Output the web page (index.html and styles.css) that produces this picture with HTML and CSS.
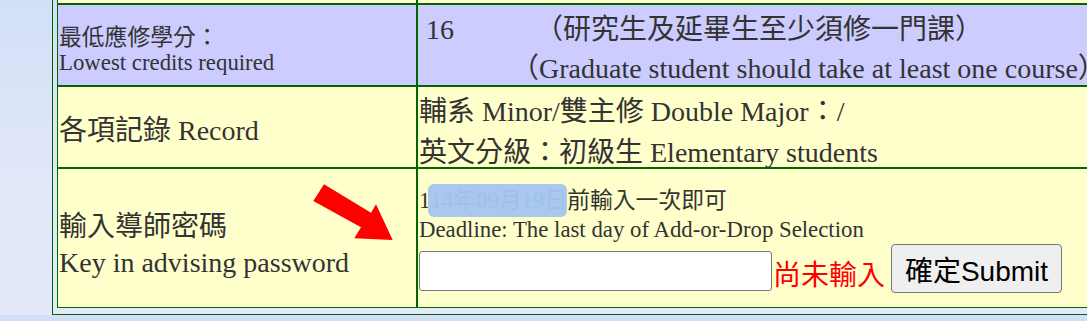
FILE: index.html
```html
<!DOCTYPE html>
<html lang="zh-Hant">
<head>
    <meta charset="UTF-8">
    <meta name="viewport" content="width=device-width, initial-scale=1.0">
    <title>選課記錄</title>
    <link rel="stylesheet" href="styles.css">
</head>
<body>
    <div class="frame">
        <table class="record">
            <tr class="row-prev">
                <td class="label"></td>
                <td class="value"></td>
            </tr>
            <tr class="row-credit">
                <td class="label label-small">最低應修學分：<br>Lowest credits required</td>
                <td class="value value-top">
                    <div class="credit-line"><span class="credit">16</span><span class="credit-note">（研究生及延畢生至少須修一門課）</span></div>
                    <div class="credit-line-en">（Graduate student should take at least one course）</div>
                </td>
            </tr>
            <tr class="row-record">
                <td class="label label-record">各項記錄 Record</td>
                <td class="value value-top">
                    <div class="record-line">輔系 Minor/雙主修 Double Major：/</div>
                    <div class="record-line-last">英文分級：初級生 Elementary students</div>
                </td>
            </tr>
            <tr class="row-advisor">
                <td class="label label-advisor">
                    輸入導師密碼<br>Key in advising password
                    <svg class="arrow" viewBox="313 184 81 57" width="81" height="57">
                        <polygon points="324,184.3 371,212.7 376,204.3 392.7,240 354.3,238.3 361,227.3 313.3,201" fill="#ff0000"/>
                    </svg>
                </td>
                <td class="value value-top value-advisor">
                    <div class="deadline-zh">1<span class="masked">14年09月19日</span>前輸入一次即可</div>
                    <div class="deadline-en">Deadline: The last day of Add-or-Drop Selection</div>
                    <div class="password-row">
                        <input type="password" class="password-input">
                        <span class="status">尚未輸入</span>
                        <button class="submit-btn">確定Submit</button>
                    </div>
                </td>
            </tr>
        </table>
    </div>
</body>
</html>
```

FILE: styles.css
```css
body {
    margin: 0;
    overflow: hidden;
    background: linear-gradient(#d2dff6, #e3e8fa 60%);
    font-family: "Liberation Serif", "Noto Sans CJK TC", serif;
    color: #333;
}

.frame {
    width: 1200px;
    margin: -40px 0 0 52px;
    padding: 4px 4px 6px;
    border: 1px solid #006600;
}

.record {
    width: 100%;
    border-spacing: 0;
}

.record td {
    box-sizing: border-box;
    border: 1px solid #006600;
    padding: 0 1px;
    vertical-align: middle;
}

.record td.value-top {
    vertical-align: top;
}

.label {
    width: 360px;
    position: relative;
    font-size: 28px;
    line-height: 36px;
}

.record td.label-small {
    padding-top: 10px;
    font-size: 22.8px;
    line-height: 25px;
}

.record td.label-record {
    padding-top: 8px;
}

.record td.label-advisor {
    padding-top: 13px;
}

.value {
    font-size: 28px;
}

.row-prev td {
    height: 39px;
    background: #ffffcc;
}

.row-credit td {
    height: 82px;
    background: #ccccff;
}

.row-record td {
    height: 82px;
    background: #ffffcc;
}

.row-advisor td {
    height: 140px;
    background: #ffffcc;
}

.credit-line {
    padding-top: 4px;
    line-height: 42px;
}

.credit {
    margin-left: 7px;
}

.credit-note {
    margin-left: 81px;
}

.credit-line-en {
    padding: 2px 0 0 92px;
    line-height: 32px;
}

.record-line {
    padding-top: 3px;
    line-height: 44px;
}

.record-line-last {
    padding-top: 5px;
    line-height: 28px;
}

.arrow {
    position: absolute;
    left: 255px;
    top: 15px;
}

.record td.value-advisor {
    padding-top: 17px;
    font-size: 22.8px;
}

.deadline-zh {
    line-height: 29px;
}

.deadline-en {
    line-height: 30px;
}

.masked {
    margin-left: -2px;
    padding: 4px 0 4px 2px;
    border-radius: 6px;
    background: #a9c8ee;
    color: #a0c0ea;
}

.password-row {
    display: flex;
    align-items: flex-end;
    margin-top: -1px;
}

.password-input {
    box-sizing: border-box;
    width: 353px;
    height: 40px;
    margin: 0 0 2px;
    padding: 0 4px;
    border: 1px solid #767676;
    border-radius: 3px;
    background: #fff;
}

.status {
    margin-left: 1px;
    font-family: "Noto Sans CJK TC", sans-serif;
    font-size: 28px;
    line-height: 40px;
    color: #ff0000;
}

.submit-btn {
    box-sizing: border-box;
    width: 171px;
    height: 49px;
    margin-left: 6px;
    padding: 0;
    border: 1px solid #767676;
    border-radius: 4px;
    background: #efefef;
    font-family: "Liberation Sans", "Noto Sans CJK TC", sans-serif;
    font-size: 28px;
    color: #000;
}
```
